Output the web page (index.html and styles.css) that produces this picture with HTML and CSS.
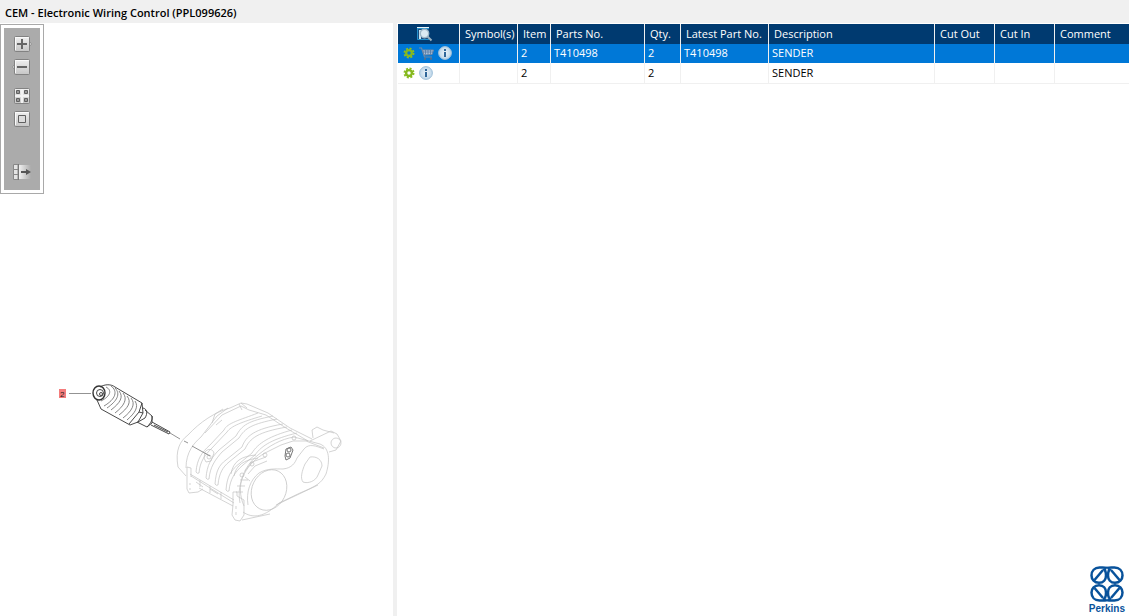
FILE: index.html
```html
<!DOCTYPE html>
<html lang="en">
<head>
<meta charset="utf-8">
<title>CEM - Electronic Wiring Control</title>
<link rel="stylesheet" href="styles.css">
</head>
<body>
<svg class="defs" width="0" height="0" aria-hidden="true">
  <defs>
    <linearGradient id="key" x1="0" y1="0" x2="0" y2="1"><stop offset="0" stop-color="#f0f0f0"/><stop offset="1" stop-color="#c6c6c6"/></linearGradient>
    <linearGradient id="fade"><stop offset="0" stop-color="#f0f0f0"/><stop offset="1" stop-color="#ababab"/></linearGradient>
    <radialGradient id="glass"><stop offset="0" stop-color="#eef5fa"/><stop offset="1" stop-color="#bcd5e8"/></radialGradient>
    <symbol id="gear" viewBox="0 0 12 12">
      <circle cx="6" cy="6" r="4.500" fill="none" stroke="#8cbd22" stroke-width="2" stroke-dasharray="2 1.530"/>
      <circle cx="6" cy="6" r="2.900" fill="none" stroke="#86b81f" stroke-width="2.400"/>
    </symbol>
    <symbol id="info" viewBox="0 0 14 14">
      <circle cx="7" cy="7" r="6.400" fill="url(#glass)" stroke="#9fc0da" stroke-width="1"/>
      <path d="M6 3h2v2H6zM6 6h2v5H6z" fill="#2f6699"/>
    </symbol>
  </defs>
</svg>
<header class="title-bar"><h1 class="title">CEM - Electronic Wiring Control (PPL099626)</h1></header>
<main class="workspace">
  <section class="viewer" aria-label="Illustration">
    <div class="toolbar">
      <div class="tools">
        <button class="tool" aria-label="Zoom in"><svg width="20" height="16" viewBox="0 0 20 16"><path d="M16 5l2.500 3-2.500 3z" fill="#eee" stroke="#8b8b8b"/><rect x="1.500" y=".5" width="15" height="15" rx="1" fill="url(#key)" stroke="#828282"/><path d="M2.500 14V1.500h13" fill="none" stroke="#fafafa"/><path d="M4 7h4V3h2v4h4v2h-4v4H8V9H4z" fill="#666"/></svg></button>
        <button class="tool" aria-label="Zoom out"><svg width="20" height="16" viewBox="0 0 20 16"><path d="M2 5L-.5 8 2 11z" fill="#eee" stroke="#8b8b8b"/><rect x="1.500" y=".5" width="15" height="15" rx="1" fill="url(#key)" stroke="#828282"/><path d="M2.500 14V1.500h13" fill="none" stroke="#fafafa"/><path d="M4 7h10v2H4z" fill="#666"/></svg></button>
        <button class="tool tool-grid" aria-label="Show all"><svg width="20" height="16" viewBox="0 0 20 16"><rect x="1.500" y=".5" width="15" height="15" rx="1" fill="url(#key)" stroke="#828282"/><path d="M9 1v14M2 8h14" stroke="#f2f2f2" stroke-width="2"/><g fill="#999" stroke="#606060"><path d="M3.500 2.500h3v3h-3zM11.500 2.500h3v3h-3zM3.500 10.500h3v3h-3zM11.500 10.500h3v3h-3z"/></g></svg></button>
        <button class="tool" aria-label="Fit"><svg width="20" height="16" viewBox="0 0 20 16"><rect x="1.500" y=".5" width="15" height="15" rx="1" fill="url(#key)" stroke="#828282"/><path d="M2.500 14V1.500h13" fill="none" stroke="#fafafa"/><path d="M5.500 4.500h7v7h-7z" fill="#ddd" stroke="#606060"/></svg></button>
        <button class="tool tool-dock" aria-label="Hide list"><svg width="20" height="16" viewBox="0 0 20 16"><path d="M6 1h12v14H6z" fill="url(#fade)"/><path d="M.5 .5h4.500v5H.5zM.5 5.500h4.500v5H.5zM.5 10.500h4.500v5H.5z" fill="#e4e4e4" stroke="#888"/><path d="M5.500 0v16" stroke="#777"/><path d="M8 7h5V5l5 3-5 3V9H8z" fill="#555"/></svg></button>
      </div>
    </div>
    <svg class="drawing" width="300" height="150" viewBox="50 380 300 150" fill="none" role="img" aria-label="Sender and housing">
      <g class="housing">
        <path d="M178 467C175 450 180 441 188 435C200 422 215 412 230 408L241 403 247 404 268 413 290 428 312 439M178 467L186 476M186 468C186 452 194 443 201 437L217 416 228 408M205 433L222 415 241 406 249 410 266 415 286 428 308 441M212 423l3-9 8-5M216 425l6-5M241 403l6 5M239 404l3 6"/>
        <path d="M196 472C197 459 202 452 210 445L224 430C227 423 240 420 258 413M199 473C200 461 205 455 212 448L227 432C231 426 242 422 262 416M196 472q1 2 3 1"/>
        <path d="M206 478C207 465 211 458 219 450L236 436C242 425 248 421 273 416M209 479C210 467 215 460 222 452L239 438C245 428 252 424 277 419M206 478q1 2 3 1"/>
        <path d="M215 484C216 471 219 465 226 460L242 447C246 436 254 429 283 424M218 485C219 473 223 467 229 462L245 449C250 438 258 432 287 427M215 484q1 2 3 1"/>
        <path d="M226 490C227 476 231 470 240 463L252 453C258 443 270 436 292 430M229 491C230 479 235 472 243 465L255 455C262 445 273 439 297 433M226 490q1 2 3 1"/>
        <path d="M187 467l4 1v9M187 467v22l2 4 9-1 5-3M190 474L234 500M191 476L234 503M200 480v7M210 486v7M221 492v7M196 482l7 5M210 489l8 5M199 488l34 18M190 483v2M190 488v2"/>
        <path d="M233 492h4v4l7 4v15l-4 6-5-1-3-5 1-10zM242 520l28-6M236 506v3M236 512v3"/>
        <path d="M205 452c3-4 8-3 9 1l-3 8-5 1-2-4z"/><circle cx="209" cy="457" r="2"/>
        <path d="M244 506C235 486 244 466 258 455C269 446 281 439 294 437L320 444C330 448 330 461 326 474C321 484 316 486 300 493L279 503C265 517 253 519 243 512M240 503C236 482 247 463 265 453L281 445 293 441 306 441 324 448M248 505C246 492 250 480 259 473C267 468 277 469 283 469C292 468 295 463 297 458L304 449C309 443 316 446 324 449M276 505l42-20"/>
        <path d="M231 474C233 461 242 456 256 455M234 476C236 465 244 460 258 458"/>
        <ellipse cx="269" cy="490" rx="17" ry="21" transform="rotate(26 269 490)"/>
        <path d="M310 457C317 456 322 460 322 466L318 475C316 481 308 484 303 482C300 478 302 471 305 464z"/>
        <path d="M310 441L331 431 337 434 341 441 336 450 329 452M313 438L312 430 317 427 323 430 334 433"/>
        <circle cx="336" cy="443" r="5"/>
        <path d="M245 471l7-9 14-5M248 474l7-8 12-5M240 480h8M237 486h8M236 492h7M245 477l5 4"/>
        <circle cx="242" cy="475" r="2"/><circle cx="252" cy="464" r="2"/><circle cx="265" cy="455" r="2"/><circle cx="294" cy="438" r="2"/>
      </g>
      <g class="fitting"><path d="M286 449l5-2 2 3-3 8-4 2-1-4z"/><circle cx="289" cy="450" r="2"/><circle cx="288" cy="455" r="2"/></g>
      <path class="leader" d="M69 393.500h22M170 433l10 6M184 441l4 2M192 446l18 10"/>
      <g class="sender">
        <ellipse cx="99" cy="393" rx="6" ry="7" stroke-width="1.400"/><circle cx="100" cy="393" r="3.500"/><circle cx="101" cy="394" r="1.500"/>
        <path d="M100 387C105 384 111 384 115 387L142 403 143 413 138 422 130 425 101 409 97 400M142 403L139 412 129 424M139 412l4 1"/>
        <path class="thread" d="M106 387c6 3 5 9-5 14M111 386c7 5 5 13-7 20M115 388c6 6 2 13-8 20M119 391c5 6 1 12-8 19M123 393c5 6 1 13-8 20M127 396c5 6 1 12-8 19M131 398c5 6 1 13-8 20M135 401c4 6 0 12-8 19"/>
        <path d="M143 408c4 1 5 5 2 10l-7 4M145 410L152 416 152 423 147 427 137 422M152 416c1 3-1 7-5 11M152 422L170 432 169 434 151 425M154 425l14 7"/>
      </g>
      <rect x="59" y="389" width="7" height="9" fill="#f47c7c"/>
      <text class="callout" x="60" y="397">2</text>
    </svg>
  </section>
  <section class="parts" aria-label="Parts list">
    <table class="parts-table">
      <colgroup><col class="c-icons"><col class="c-symbol"><col class="c-item"><col class="c-part"><col class="c-qty"><col class="c-latest"><col class="c-desc"><col class="c-cut"><col class="c-cut"><col></colgroup>
      <thead>
        <tr><th class="search-head"><svg width="17" height="16" viewBox="0 0 17 16" role="img" aria-label="Search"><path d="M1 3h12v11H1z" fill="#1a4d80"/><path d="M1.500 3v10.500H13" fill="none" stroke="#2490cc"/><path d="M1 1h12v2H1z" fill="#e8f4fa"/><path d="M1 2.500h12" stroke="#2490cc" stroke-width="1"/><path d="M3 4h2v9H3z" fill="#cbe4f2"/><path d="M11.500 10.500l4 4" stroke="#9ab0bf" stroke-width="2"/><circle cx="8.500" cy="7.500" r="4.200" fill="#dbeaf3" stroke="#9db6c6" stroke-width="1.400"/></svg></th><th>Symbol(s)</th><th>Item</th><th>Parts No.</th><th>Qty.</th><th>Latest Part No.</th><th>Description</th><th>Cut Out</th><th>Cut In</th><th>Comment</th></tr>
      </thead>
      <tbody>
        <tr class="selected"><td><div class="icons"><svg width="12" height="12"><use href="#gear"/></svg><svg width="15" height="13" viewBox="0 0 15 13" fill="none"><path d="M3.500 3h11L13 7.500 5 8z" fill="#a9c2dc" stroke="#6f87a5"/><path d="M6.500 3v4.500M9 3v4.500M11.500 3v4.500M4 5h10" stroke="#5578a3" stroke-width=".8"/><path d="M0 1h2.500L5.500 10H13" stroke="#6f87a5" stroke-width="1.200"/><circle cx="6" cy="11.800" r="1.100" fill="#5b6f88"/><circle cx="12" cy="11.800" r="1.100" fill="#5b6f88"/></svg><svg width="14" height="14"><use href="#info"/></svg></div></td><td></td><td>2</td><td>T410498</td><td>2</td><td>T410498</td><td>SENDER</td><td></td><td></td><td></td></tr>
        <tr><td><div class="icons"><svg width="12" height="12"><use href="#gear"/></svg><svg width="14" height="14"><use href="#info"/></svg></div></td><td></td><td>2</td><td></td><td>2</td><td></td><td>SENDER</td><td></td><td></td><td></td></tr>
      </tbody>
    </table>
    <footer class="brand">
      <svg width="34" height="36" viewBox="0 0 34 36" fill="none" stroke="#08529b" stroke-width="2.500"><g id="loop"><path d="M17 2C14 1 12 1.500 9.500 1.500C4.500 1.500 1.500 5 1.500 9.500C1.500 13.500 4.500 16.800 9 16.800C13.500 16.800 16 13.500 16 9.500C16 6 15.500 3.500 13 2.500"/><path d="M13 4L4.500 14"/></g><use href="#loop" transform="matrix(-1 0 0 1 34 0)"/><use href="#loop" transform="matrix(1 0 0 -1 0 36)"/><use href="#loop" transform="matrix(-1 0 0 -1 34 36)"/></svg>
      <span class="brand-name">Perkins</span>
    </footer>
  </section>
</main>
</body>
</html>
```
FILE: styles.css
```css
* { box-sizing: border-box; }
body { margin: 0; min-height: 100vh; display: flex; flex-direction: column; background: #f0f0f0; color: #000; font: 11px/16px "Open Sans", "Noto Sans", sans-serif; }
.defs { position: absolute; }
.title-bar { padding: 5px 5px 2px; }
.title { margin: 0; font-size: 11px; line-height: 16px; font-weight: 600; }
.workspace { flex: 1; display: grid; grid-template-columns: minmax(0, 393fr) minmax(0, 732fr); column-gap: 4px; }
.viewer, .parts { background: #fff; }
.viewer { position: relative; }
.toolbar { display: inline-block; margin-top: 1px; padding: 3px; border: 1px solid #a9a9a9; }
.tools { display: flex; flex-direction: column; gap: 7px; width: 36px; padding: 8px 7px 10px 9px; background: #ababab; }
.tool { display: block; height: 16px; padding: 0; border: 0; background: none; }
.tool svg { display: block; overflow: visible; }
.tool-grid { margin-top: 6px; }
.tool-dock { margin-top: 30px; }
.drawing { position: absolute; left: 50px; top: 357px; }
.housing { stroke: #c2c2c2; stroke-width: .7; }
.fitting { stroke: #777; }
.leader { stroke: #777; stroke-width: .8; }
.sender { stroke: #333; stroke-width: .9; }
.thread { stroke: #777; }
.callout { font: 8px "Liberation Sans", sans-serif; fill: #222; }
.parts { display: flex; flex-direction: column; justify-content: space-between; padding: 1px 0 0 1px; }
.parts-table { width: 100%; table-layout: fixed; border-collapse: separate; border-spacing: 0; }
.parts-table th, .parts-table td { padding: 0 3px; border-right: 1px solid #f0f0f0; text-align: left; font-weight: 400; white-space: nowrap; }
.parts-table th:last-child, .parts-table td:last-child { border-right: 0; }
.parts-table th { height: 20px; padding: 0 5px; background: #003a70; color: #fff; }
.parts-table td { height: 21px; border-bottom: 1px solid #f0f0f0; }
.parts-table .selected td { height: 19px; padding-bottom: 1px; border-bottom: 0; background: #0078d7; color: #fff; }
.parts-table .search-head { padding: 0 0 0 18px; }
.search-head svg { display: block; }
.c-icons { width: 62px; }
.c-symbol { width: 58px; }
.c-item { width: 33px; }
.c-part { width: 94px; }
.c-qty { width: 36px; }
.c-latest { width: 88px; }
.c-desc { width: 166px; }
.c-cut { width: 60px; }
.icons { display: flex; align-items: center; gap: 4px; padding-left: 2px; }
.icons svg { display: block; }
.brand { align-self: flex-end; display: flex; flex-direction: column; align-items: center; padding: 0 4px 0 0; color: #08529b; }
.brand-name { font: 700 10px/14px "Liberation Sans", sans-serif; }
```
